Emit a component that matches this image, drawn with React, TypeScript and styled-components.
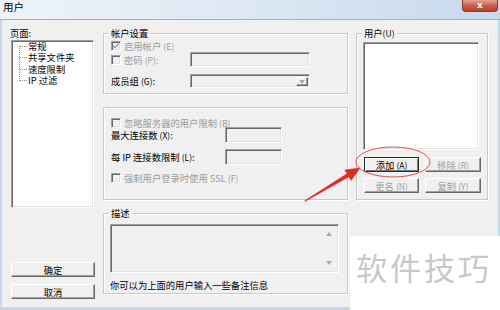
import React from "react";
import styled, { createGlobalStyle, css } from "styled-components";

const GlobalStyle = createGlobalStyle`
  html, body {
    margin: 0;
    padding: 0;
  }
  body {
    width: 500px;
    height: 310px;
    overflow: hidden;
    font-family: "Noto Sans CJK SC", "Noto Sans", sans-serif;
    font-size: 9.3px;
    color: #000;
  }
  * {
    box-sizing: border-box;
  }
`;

const sunken = css`
  border: 1px solid;
  border-color: #a0a0a0 #ffffff #ffffff #a0a0a0;
  box-shadow: inset 1px 1px 0 #696969, inset -1px -1px 0 #e3e3e3;
`;

const raised = css`
  border: 1px solid;
  border-color: #ffffff #696969 #696969 #ffffff;
  box-shadow: inset -1px -1px 0 #a0a0a0;
`;

const Window = styled.div`
  position: relative;
  width: 500px;
  height: 310px;
  display: flex;
  flex-direction: column;
  background: #c6d7ea;
`;

const TitleBar = styled.div`
  height: 20px;
  display: flex;
  justify-content: space-between;
  align-items: flex-start;
  padding-left: 3px;
  border-bottom: 1px solid #9fb0c4;
  background: linear-gradient(to right, #eef3f9, #dfe9f4 45%, #c7d9ed);
`;

const TitleText = styled.span`
  font-size: 10.5px;
  line-height: 14px;
`;

const CloseButton = styled.div`
  width: 36px;
  height: 12px;
  margin-right: 2px;
  display: flex;
  align-items: center;
  justify-content: center;
  color: #fff;
  font-family: "DejaVu Sans", sans-serif;
  font-weight: bold;
  font-size: 9px;
  line-height: 1;
  border: 1px solid #8d3b2f;
  border-top: none;
  border-radius: 0 0 4px 4px;
  background: linear-gradient(#e6a493, #cf5f4b 50%, #b9402c);
`;

const Client = styled.div`
  flex: 1;
  margin: 0 2px 3px 2px;
  padding: 7px 0 8px 9px;
  background: #f0f0f0;
  display: grid;
  grid-template-columns: 84px 245px 132px;
  column-gap: 8px;
`;

const Column = styled.div`
  display: flex;
  flex-direction: column;
`;

const PageLabel = styled.div`
  line-height: 13px;
  margin-left: -1px;
`;

const ListBox = styled.div<{ $w?: number; $h: number }>`
  ${sunken};
  width: ${(p) => (p.$w ? `${p.$w}px` : "auto")};
  height: ${(p) => p.$h}px;
  background: #fff;
`;

const Tree = styled.ul`
  position: relative;
  list-style: none;
  margin: 0;
  padding: 0 0 0 16px;

  &::before {
    content: "";
    position: absolute;
    left: 7px;
    top: 5px;
    height: 35px;
    border-left: 1px dotted #8a8a8a;
  }
`;

const TreeItem = styled.li`
  position: relative;
  height: 11.4px;
  line-height: 11.4px;
  white-space: pre;

  &::before {
    content: "";
    position: absolute;
    left: -8px;
    top: 5px;
    width: 7px;
    border-top: 1px dotted #8a8a8a;
  }
`;

const ButtonStack = styled.div`
  margin-top: auto;
  display: flex;
  flex-direction: column;
  gap: 7px;
`;

const Button = styled.button<{ $default?: boolean }>`
  ${raised};
  height: 15px;
  padding: 0;
  font: inherit;
  line-height: 12px;
  background: #f0f0f0;
  color: #000;
  ${(p) =>
    p.$default &&
    css`
      border-color: #2b2b2b;
      box-shadow: inset 1px 1px 0 #fff, inset -1px -1px 0 #7a7a7a;
    `}
  &:disabled {
    color: #a0a0a0;
  }
`;

const GroupBox = styled.div<{ $mt: number; $h: number; $pad: string }>`
  position: relative;
  margin-top: ${(p) => p.$mt}px;
  height: ${(p) => p.$h}px;
  padding: ${(p) => p.$pad};
  border: 1px solid #c9c9c9;
  box-shadow: inset 1px 1px 0 #fff, 1px 1px 0 #fff;
  display: flex;
  flex-direction: column;
`;

const GroupTitle = styled.span`
  position: absolute;
  top: -7px;
  left: 5px;
  padding: 0 2px;
  line-height: 13px;
  background: #f0f0f0;
`;

const Row = styled.div<{ $h: number; $mt?: number }>`
  display: flex;
  align-items: center;
  height: ${(p) => p.$h}px;
  margin-top: ${(p) => p.$mt ?? 0}px;
  white-space: pre;
`;

const FieldLabel = styled.span<{ $w?: number; $disabled?: boolean }>`
  display: flex;
  align-items: center;
  width: ${(p) => (p.$w ? `${p.$w}px` : "auto")};
  flex-shrink: 0;
  color: ${(p) => (p.$disabled ? "#9c9c9c" : "#000")};
`;

const Key = styled.span`
  font-size: 8.5px;
`;

const Box = styled.span`
  ${sunken};
  width: 10px;
  height: 10px;
  margin-right: 3px;
  background: #f0f0f0;
  display: flex;
  align-items: center;
  justify-content: center;
`;

const TextBox = styled.div<{ $w: number; $h: number }>`
  ${sunken};
  position: relative;
  width: ${(p) => p.$w}px;
  height: ${(p) => p.$h}px;
  background: #f0f0f0;
  display: flex;
  justify-content: flex-end;
`;

const DropButton = styled.span`
  ${raised};
  width: 12px;
  margin: 2px 1px 1px 0;
  display: flex;
  align-items: center;
  justify-content: center;
`;

const ScrollBar = styled.div`
  width: 14px;
  margin: 2px 2px 2px 0;
  display: flex;
  flex-direction: column;
  justify-content: space-between;
  align-items: center;
  padding: 5px 0;
`;

const Hint = styled.div`
  margin-top: 6px;
  line-height: 12px;
  white-space: pre;
`;

const ButtonGrid = styled.div`
  margin: 7px 0 0 1px;
  display: grid;
  grid-template-columns: 55px 56px;
  grid-auto-rows: 15px;
  gap: 6px;
`;

const Watermark = styled.div`
  position: absolute;
  left: 350px;
  top: 236px;
  right: 0;
  bottom: 0;
  padding: 15px 0 0 6px;
  background: #fff;
  color: #c8c8c8;
  font-size: 31px;
  line-height: 31px;
  letter-spacing: 3px;
  white-space: pre;
`;

const Annotation = styled.svg`
  position: absolute;
  left: 0;
  top: 0;
  pointer-events: none;
`;

const Mn = ({ k }: { k: string }) => <Key>({k})</Key>;

function CheckBox({ checked }: { checked?: boolean }) {
  return (
    <Box>
      {checked && (
        <svg width="8" height="8" viewBox="0 0 8 8">
          <polyline points="1,3.5 3,5.8 7,1.5" fill="none" stroke="#a0a0a0" strokeWidth="1.4" />
        </svg>
      )}
    </Box>
  );
}

const Triangle = ({ up }: { up?: boolean }) => (
  <svg width="6" height="4" viewBox="0 0 6 4">
    <polygon points={up ? "0,4 6,4 3,0" : "0,0 6,0 3,4"} fill="#a8a8a8" />
  </svg>
);

export default function App() {
  return (
    <>
      <GlobalStyle />
      <Window>
        <TitleBar>
          <TitleText>用户</TitleText>
          <CloseButton>x</CloseButton>
        </TitleBar>
        <Client>
          <Column>
            <PageLabel>页面:</PageLabel>
            <ListBox $w={83} $h={168}>
              <Tree>
                <TreeItem>常规</TreeItem>
                <TreeItem>共享文件夹</TreeItem>
                <TreeItem>速度限制</TreeItem>
                <TreeItem>IP 过滤</TreeItem>
              </Tree>
            </ListBox>
            <ButtonStack>
              <Button>确定</Button>
              <Button>取消</Button>
            </ButtonStack>
          </Column>

          <Column>
            <GroupBox $mt={6} $h={61} $pad="7px 0 0 7px">
              <GroupTitle>帐户设置</GroupTitle>
              <Row $h={10}>
                <FieldLabel $disabled>
                  <CheckBox checked />
                  启用帐户 <Mn k="E" />
                </FieldLabel>
              </Row>
              <Row $h={15} $mt={1}>
                <FieldLabel $w={79} $disabled>
                  <CheckBox />
                  密码 <Mn k="P" />:
                </FieldLabel>
                <TextBox $w={120} $h={15} />
              </Row>
              <Row $h={14} $mt={7}>
                <FieldLabel $w={79}>
                  成员组 <Mn k="G" />:
                </FieldLabel>
                <TextBox $w={120} $h={14}>
                  <DropButton>
                    <Triangle />
                  </DropButton>
                </TextBox>
              </Row>
            </GroupBox>

            <GroupBox $mt={13} $h={93} $pad="10px 0 0 7px">
              <Row $h={10}>
                <FieldLabel $disabled>
                  <CheckBox />
                  忽略服务器的用户限制 <Mn k="B" />
                </FieldLabel>
              </Row>
              <Row $h={16} $mt={-1}>
                <FieldLabel $w={114}>
                  最大连接数 <Mn k="X" />:
                </FieldLabel>
                <TextBox $w={57} $h={16} />
              </Row>
              <Row $h={16} $mt={6}>
                <FieldLabel $w={114}>
                  每 IP 连接数限制 <Mn k="L" />:
                </FieldLabel>
                <TextBox $w={57} $h={16} />
              </Row>
              <Row $h={10} $mt={8}>
                <FieldLabel $disabled>
                  <CheckBox />
                  强制用户登录时使用 SSL <Mn k="F" />
                </FieldLabel>
              </Row>
            </GroupBox>

            <GroupBox $mt={13} $h={81} $pad="10px 0 0 6px">
              <GroupTitle>描述</GroupTitle>
              <TextBox $w={229} $h={49}>
                <ScrollBar>
                  <Triangle up />
                  <Triangle />
                </ScrollBar>
              </TextBox>
              <Hint>你可以为上面的用户输入一些备注信息</Hint>
            </GroupBox>
          </Column>

          <Column>
            <GroupBox $mt={6} $h={167} $pad="8px 0 0 6px">
              <GroupTitle>
                用户<Mn k="U" />
              </GroupTitle>
              <ListBox $w={116} $h={108} />
              <ButtonGrid>
                <Button $default>
                  添加 <Mn k="A" />
                </Button>
                <Button disabled>
                  移除 <Mn k="R" />
                </Button>
                <Button disabled>
                  更名 <Mn k="N" />
                </Button>
                <Button disabled>
                  复制 <Mn k="Y" />
                </Button>
              </ButtonGrid>
            </GroupBox>
          </Column>
        </Client>

        <Watermark>软件技巧</Watermark>

        <Annotation width="500" height="310" viewBox="0 0 500 310">
          <ellipse cx="393" cy="162" rx="37" ry="15" fill="none" stroke="#e0504a" strokeWidth="1" />
          <polygon
            points="305.2,201.3 348.9,176.7 351.1,180.4 360,168 344.9,170 347.1,173.7 304.8,200.7"
            fill="#e02a22"
            stroke="#e02a22"
            strokeWidth="0.6"
            strokeLinejoin="round"
          />
        </Annotation>
      </Window>
    </>
  );
}
